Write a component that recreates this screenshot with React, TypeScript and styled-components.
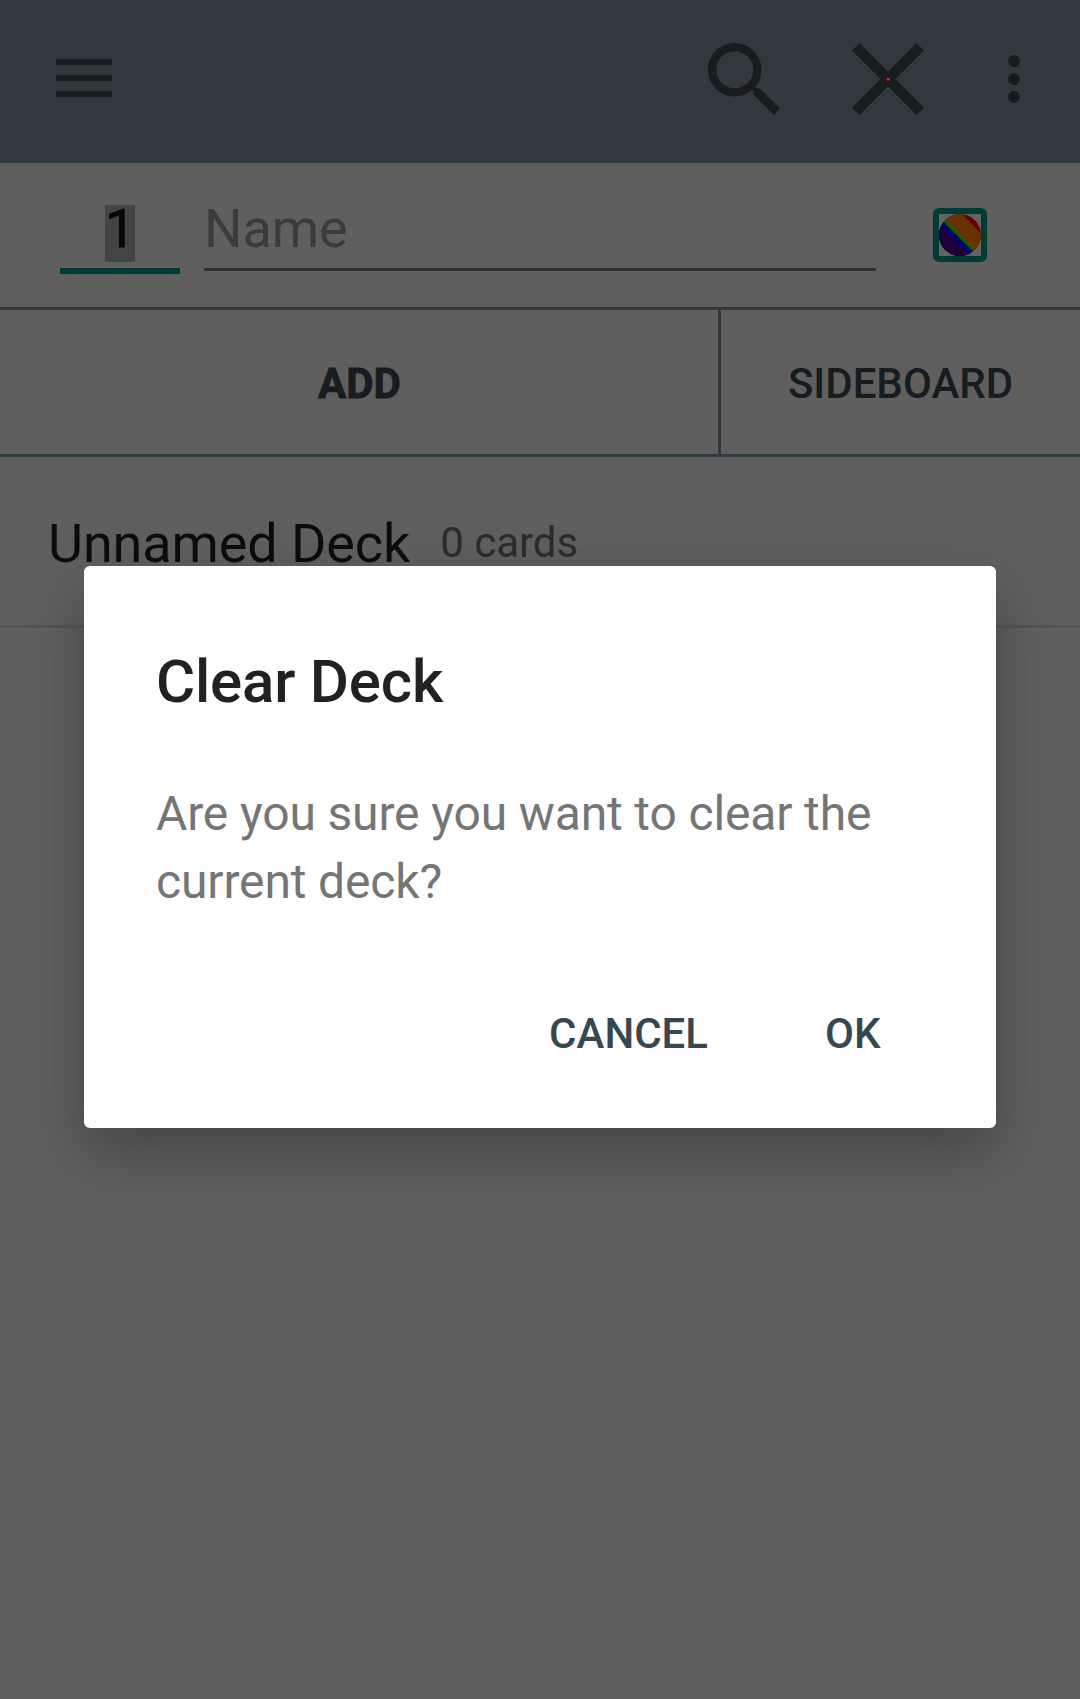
import React from "react";
import styled, { createGlobalStyle } from "styled-components";

const GlobalStyle = createGlobalStyle`
  *, *::before, *::after { box-sizing: border-box; }
  html, body { margin: 0; padding: 0; background: #5f5f5f; }
  body { font-family: Roboto, "Noto Sans", sans-serif; }
  button { font: inherit; border: 0; background: none; padding: 0; margin: 0; color: inherit; }
`;

const Screen = styled.main`
  position: relative;
  width: 1080px;
  height: 1699px;
  overflow: hidden;
  display: flex;
  flex-direction: column;
  background: #eeeeee;
`;

const Toolbar = styled.header`
  height: 163px;
  padding: 0 60px 5px 56px;
  display: flex;
  align-items: center;
  justify-content: space-between;
  background: #78909c;
  color: #3c484e;
`;

const ToolbarActions = styled.div`
  display: flex;
  align-items: center;
  gap: 72px;
`;

const IconButton = styled.button<{ $w: number }>`
  display: flex;
  align-items: center;
  justify-content: center;
  width: ${(p) => p.$w}px;
  svg { display: block; fill: currentColor; }
`;

const MenuButton = styled(IconButton)`
  margin-bottom: 2px;
`;

const MoreButton = styled(IconButton)`
  margin-left: 12px;
`;

const EntryRow = styled.section`
  height: 144px;
  padding: 0 93px 0 60px;
  display: flex;
  align-items: flex-start;
`;

const Field = styled.div<{ $w: number; $line: string; $thick: number }>`
  width: ${(p) => p.$w}px;
  height: ${(p) => 105 + p.$thick}px;
  border-bottom: ${(p) => p.$thick}px solid ${(p) => p.$line};
  font-size: 54px;
  line-height: 47px;
  padding-top: 42px;
`;

const CountField = styled(Field)`
  display: flex;
  justify-content: center;
  margin-right: 24px;
`;

const Selected = styled.span`
  width: 30px;
  height: 57px;
  background: #a9aaae;
  color: #101414;
  -webkit-text-stroke: 0.9px #101414;
`;

const Placeholder = styled.span`
  color: #949494;
  letter-spacing: -0.1px;
`;

const ColorPicker = styled.button`
  width: 54px;
  height: 54px;
  margin: 45px 0 0 auto;
  border: 6px solid #009688;
  border-radius: 6px;
  background: #fafafa;
  svg { display: block; }
`;

const ButtonBar = styled.nav`
  height: 150px;
  display: grid;
  grid-template-columns: 718px 3px 359px;
  border-top: 3px solid #78909c;
  border-bottom: 3px solid #78909c;
`;

const BarDivider = styled.div`
  background: #78909c;
`;

const BarButton = styled.button<{ $active?: boolean }>`
  && {
    font-size: 42px;
    line-height: 50px;
    font-weight: ${(p) => (p.$active ? 700 : 500)};
    -webkit-text-stroke: ${(p) => (p.$active ? "0.9px #37474f" : "0")};
    color: #37474f;
    padding: 4px 0 0 ${(p) => (p.$active ? 1 : 0)}px;
  }
`;

const DeckRow = styled.section`
  height: 171px;
  padding: 55px 48px 0 48px;
  display: flex;
  align-items: flex-start;
  gap: 30px;
  border-bottom: 3px solid #d4d4d4;
  white-space: nowrap;
`;

const DeckName = styled.div`
  font-size: 54px;
  line-height: 64px;
  letter-spacing: -0.12px;
  color: #1f1f1f;
`;

const DeckCount = styled.div`
  font-size: 42px;
  line-height: 50px;
  padding-top: 6px;
  color: #6e6e6e;
`;

const Scrim = styled.div`
  position: absolute;
  inset: 0;
  padding: 566px 84px 0;
  background: rgba(0, 0, 0, 0.6);
`;

const TouchDot = styled.div`
  position: absolute;
  left: 887px;
  top: 78px;
  width: 3px;
  height: 3px;
  background: #c00010;
  &::before {
    content: "";
    display: block;
    width: 2px;
    height: 2px;
    background: #ff1744;
  }
`;

const Dialog = styled.div`
  height: 562px;
  padding: 81px 72px 0;
  display: flex;
  flex-direction: column;
  background: #ffffff;
  border-radius: 6px;
  box-shadow: 0 24px 60px rgba(0, 0, 0, 0.27);
`;

const DialogTitle = styled.h2`
  margin: 0;
  font-size: 60px;
  line-height: 70px;
  font-weight: 500;
  letter-spacing: -0.2px;
  color: #212121;
`;

const DialogText = styled.p`
  margin: 63px 0 0;
  font-size: 48px;
  line-height: 68px;
  letter-spacing: -0.14px;
  color: #757575;
`;

const DialogActions = styled.div`
  display: flex;
  justify-content: flex-end;
  gap: 117px;
  margin-top: 93px;
  padding-right: 43.5px;
`;

const DialogButton = styled.button`
  && {
    font-size: 42px;
    line-height: 50px;
    font-weight: 500;
    color: #37474f;
  }
`;

const MenuIcon = () => (
  <svg width="56" height="38" viewBox="0 0 56 38">
    <path d="M0 0h56v6H0zM0 16h56v6H0zM0 32h56v6H0z" />
  </svg>
);

const SearchIcon = () => (
  <svg width="72" height="72" viewBox="3 3 17.49 17.49">
    <path d="M15.5 14h-.79l-.28-.27C15.41 12.59 16 11.11 16 9.5 16 5.91 13.09 3 9.5 3S3 5.91 3 9.5 5.91 16 9.5 16c1.61 0 3.09-.59 4.23-1.57l.27.28v.79l5 4.99L20.49 19l-4.99-5zm-6 0C7.01 14 5 11.99 5 9.5S7.01 5 9.5 5 14 7.01 14 9.5 11.99 14 9.5 14z" />
  </svg>
);

const ClearIcon = () => (
  <svg width="72" height="72" viewBox="5 5 14 14">
    <path d="M19 6.45L17.55 5 12 10.55 6.45 5 5 6.45 10.55 12 5 17.55 6.45 19 12 13.45 17.55 19 19 17.55 13.45 12z" />
  </svg>
);

const MoreIcon = () => (
  <svg width="12" height="48" viewBox="0 0 12 48">
    <circle cx="6" cy="6" r="6" />
    <circle cx="6" cy="24" r="6" />
    <circle cx="6" cy="42" r="6" />
  </svg>
);

const RainbowIcon = () => (
  <svg width="42" height="42" viewBox="0 0 42 42">
    <clipPath id="disc">
      <circle cx="21" cy="21" r="21" />
    </clipPath>
    <g clipPath="url(#disc)">
      <rect width="42" height="42" fill="#ff0000" />
      <path d="M-20 -43L22.7 0L42 19.3L90 67V100H-20z" fill="#ff8000" />
      <path d="M-20 -20L62 62V100H-20z" fill="#00ff00" />
      <path d="M-20 -16.5L62 65.5V100H-20z" fill="#0000ff" />
      <path d="M-20 -8.3L62 73.7V100H-20z" fill="#4b0082" />
    </g>
  </svg>
);

export default function App() {
  return (
    <>
      <GlobalStyle />
      <Screen>
        <Toolbar>
          <MenuButton $w={56} aria-label="Menu"><MenuIcon /></MenuButton>
          <ToolbarActions>
            <IconButton $w={72} aria-label="Search"><SearchIcon /></IconButton>
            <IconButton $w={72} aria-label="Clear"><ClearIcon /></IconButton>
            <MoreButton $w={12} aria-label="More"><MoreIcon /></MoreButton>
          </ToolbarActions>
        </Toolbar>
        <EntryRow>
          <CountField $w={120} $line="#009688" $thick={6}>
            <Selected>1</Selected>
          </CountField>
          <Field $w={672} $line="#777777" $thick={3}>
            <Placeholder>Name</Placeholder>
          </Field>
          <ColorPicker aria-label="Colors"><RainbowIcon /></ColorPicker>
        </EntryRow>
        <ButtonBar>
          <BarButton $active>ADD</BarButton>
          <BarDivider />
          <BarButton>SIDEBOARD</BarButton>
        </ButtonBar>
        <DeckRow>
          <DeckName>Unnamed Deck</DeckName>
          <DeckCount>0 cards</DeckCount>
        </DeckRow>
        <Scrim>
          <TouchDot />
          <Dialog role="dialog">
            <DialogTitle>Clear Deck</DialogTitle>
            <DialogText>Are you sure you want to clear the current deck?</DialogText>
            <DialogActions>
              <DialogButton>CANCEL</DialogButton>
              <DialogButton>OK</DialogButton>
            </DialogActions>
          </Dialog>
        </Scrim>
      </Screen>
    </>
  );
}
